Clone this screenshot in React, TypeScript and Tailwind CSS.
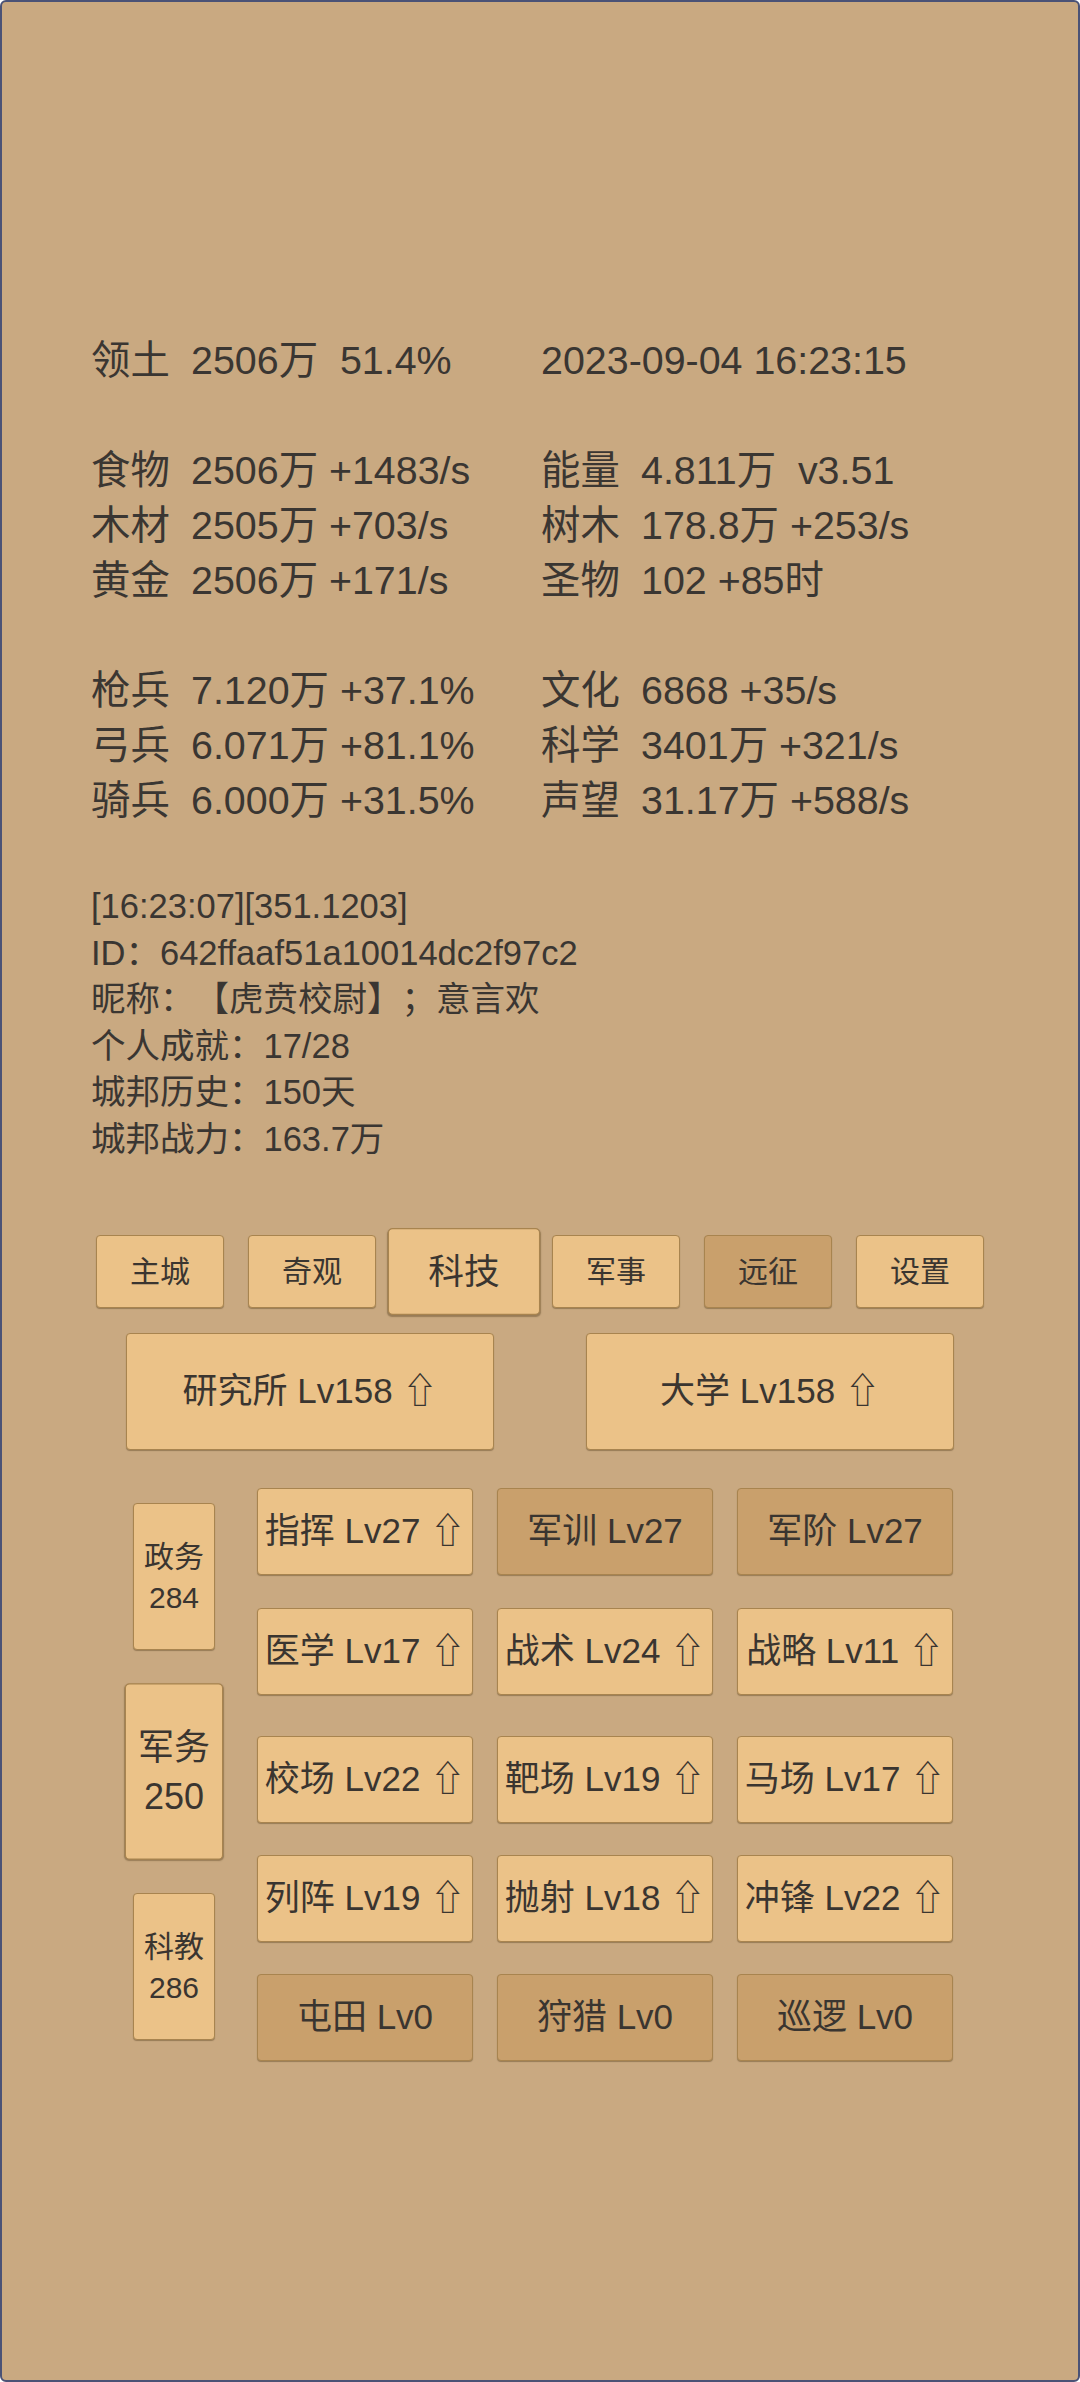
import React from 'react';

const FONT = { fontFamily: '"Liberation Sans", "Noto Sans CJK SC", "DejaVu Sans", sans-serif' };

type Cell = [string, string] | null;

const statRows: [Cell, Cell][] = [
  [['领土', '2506万  51.4%'], ['', '2023-09-04 16:23:15']],
  [null, null],
  [['食物', '2506万 +1483/s'], ['能量', '4.811万  v3.51']],
  [['木材', '2505万 +703/s'], ['树木', '178.8万 +253/s']],
  [['黄金', '2506万 +171/s'], ['圣物', '102 +85时']],
  [null, null],
  [['枪兵', '7.120万 +37.1%'], ['文化', '6868 +35/s']],
  [['弓兵', '6.071万 +81.1%'], ['科学', '3401万 +321/s']],
  [['骑兵', '6.000万 +31.5%'], ['声望', '31.17万 +588/s']],
  [null, null],
];

const info = [
  '[16:23:07][351.1203]',
  'ID：642ffaaf51a10014dc2f97c2',
  '昵称：【虎贲校尉】；意言欢',
  '个人成就：17/28',
  '城邦历史：150天',
  '城邦战力：163.7万',
];

const tabs = [
  { name: '主城' },
  { name: '奇观' },
  { name: '科技', active: true },
  { name: '军事' },
  { name: '远征', dark: true },
  { name: '设置' },
];

const sides = [
  { name: '政务', n: '284' },
  { name: '军务', n: '250', active: true },
  { name: '科教', n: '286' },
];

const techRows = [
  { mt: 'mt-0', items: [['指挥 Lv27', true], ['军训 Lv27', false], ['军阶 Lv27', false]] },
  { mt: 'mt-[33px]', items: [['医学 Lv17', true], ['战术 Lv24', true], ['战略 Lv11', true]] },
  { mt: 'mt-[41px]', items: [['校场 Lv22', true], ['靶场 Lv19', true], ['马场 Lv17', true]] },
  { mt: 'mt-[32px]', items: [['列阵 Lv19', true], ['抛射 Lv18', true], ['冲锋 Lv22', true]] },
  { mt: 'mt-[32px]', items: [['屯田 Lv0', false], ['狩猎 Lv0', false], ['巡逻 Lv0', false]] },
] as { mt: string; items: [string, boolean][] }[];

const btnBase = 'flex items-center justify-center rounded-[4px] border border-[#a8844f] text-[#3a3530] shadow-[0_1px_1px_rgba(60,40,10,0.35)]';
const light = 'bg-[#ebc288]';
const dark = 'bg-[#c9a06c]';

function StatCell({ cell }: { cell: Cell }) {
  if (!cell) return <div className="h-[55px]" />;
  return (
    <div className="flex h-[55px] items-center">
      {cell[0] ? <span className="w-[100px] shrink-0">{cell[0]}</span> : null}
      <span className="whitespace-pre">{cell[1]}</span>
    </div>
  );
}

export default function App() {
  return (
    <div style={FONT} className="h-[2382px] w-[1080px] overflow-hidden rounded-[6px] border-2 border-[#4a5276] bg-[#c9a981] text-[#3a3632] [text-spacing-trim:space-all]">
      <div className="pl-[89px] pt-[331px]">
        <div className="grid grid-cols-[450px_1fr] text-[39.4px] leading-[55px]">
          {statRows.map((r, i) => (
            <React.Fragment key={i}>
              <StatCell cell={r[0]} />
              <StatCell cell={r[1]} />
            </React.Fragment>
          ))}
        </div>
        <div className="text-[34.5px] leading-[46.5px]">
          {info.map((t) => (
            <div key={t} className="whitespace-pre">{t}</div>
          ))}
        </div>
      </div>

      <div className="mt-[73px] flex justify-center gap-[24px]">
        {tabs.map((t) => (
          <div
            key={t.name}
            className={`${btnBase} h-[73px] w-[128px] text-[30px] ${t.dark ? dark : light} ${t.active ? 'scale-[1.19]' : ''}`}
          >
            {t.name}
          </div>
        ))}
      </div>

      <div className="mt-[25px] flex justify-center gap-[92px]">
        {['研究所 Lv158 ⇧', '大学 Lv158 ⇧'].map((t) => (
          <div key={t} className={`${btnBase} ${light} h-[117px] w-[368px] text-[35px] whitespace-pre`}>
            {t}
          </div>
        ))}
      </div>

      <div className="ml-[131px] mt-[38px] flex gap-[42px]">
        <div className="mt-[15px] flex w-[82px] flex-col gap-[48px]">
          {sides.map((s) => (
            <div
              key={s.name}
              className={`${btnBase} ${light} h-[147px] w-[82px] flex-col text-[30px] leading-[41px] ${s.active ? 'scale-[1.2]' : ''}`}
            >
              <span>{s.name}</span>
              <span>{s.n}</span>
            </div>
          ))}
        </div>
        <div className="w-[696px]">
          {techRows.map((row, i) => (
            <div key={i} className={`${row.mt} grid grid-cols-3 gap-[24px]`}>
              {row.items.map(([label, up]) => (
                <div key={label} className={`${btnBase} ${up ? light : dark} h-[87px] text-[35px] whitespace-pre`}>
                  {up ? `${label} ⇧` : label}
                </div>
              ))}
            </div>
          ))}
        </div>
      </div>
    </div>
  );
}
